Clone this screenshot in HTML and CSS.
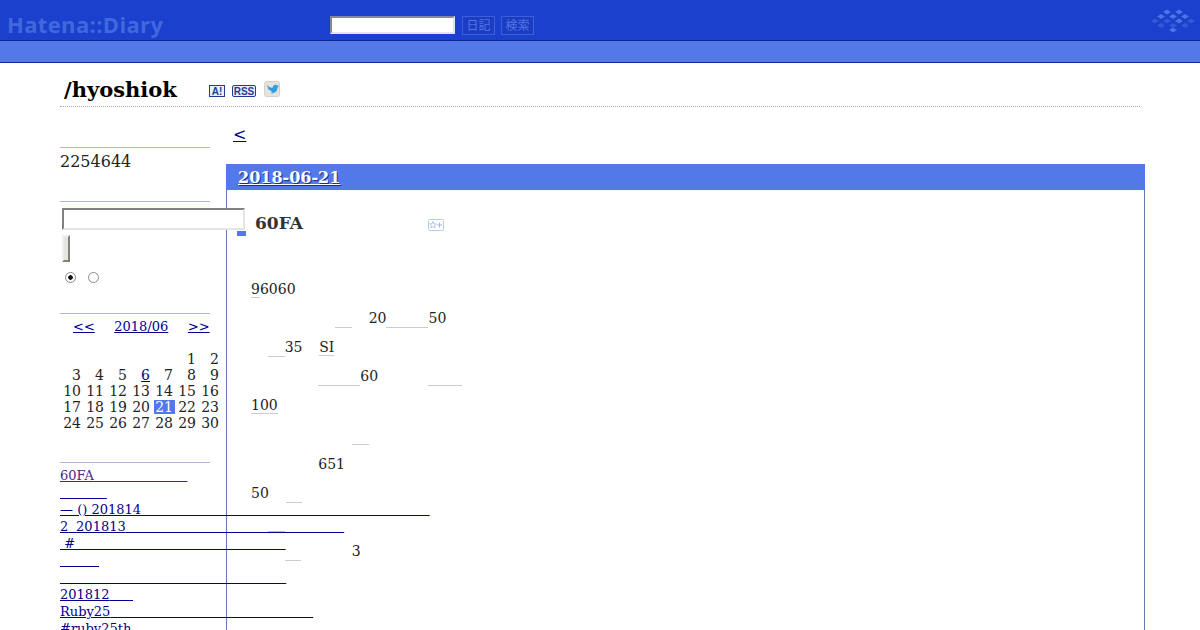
FILE: index.html
```html
<!DOCTYPE html>
<html>
<head>
	<meta charset="utf-8">
	<title>/hyoshiok</title>
	<link rel="stylesheet" href="styles.css">
</head>
<body>
<div class="page">
	<div class="topbar">
		<span class="logo">Hatena::Diary</span>
		<form class="topsearch">
			<input class="topinput" type="text">
			<span class="topbtn">日記</span>
			<span class="topbtn">検索</span>
		</form>
		<svg class="mark" width="44" height="26" viewBox="0 0 44 26">
			<g fill="#4d74e4">
				<path d="M12 3l4-2.500 4 2.500-4 2.500zM24 3l4-2.500 4 2.500-4 2.500z"/>
				<path d="M6 7.500l4-2.500 4 2.500-4 2.500zM18 7.500l4-2.500 4 2.500-4 2.500zM30 7.500l4-2.500 4 2.500-4 2.500z"/>
				<path d="M24 12l4-2.500 4 2.500-4 2.500zM18 21l4-2.500 4 2.500-4 2.500z"/>
			</g>
			<g fill="#3458d8">
				<path d="M0 12l4-2.500 4 2.500-4 2.500zM12 12l4-2.500 4 2.500-4 2.500zM36 12l4-2.500 4 2.500-4 2.500z"/>
				<path d="M6 16.500l4-2.500 4 2.500-4 2.500zM18 16.500l4-2.500 4 2.500-4 2.500zM30 16.500l4-2.500 4 2.500-4 2.500z"/>
			</g>
		</svg>
	</div>
	<div class="subbar"></div>

	<div class="content">
		<div class="title">
			<h1>/hyoshiok</h1>
			<svg class="icon-a" width="16" height="12" viewBox="0 0 16 12">
				<rect x="0.500" y="0.500" width="15" height="11" fill="#e8eefa" stroke="#1c3f94"/>
				<text x="8" y="9.800" text-anchor="middle" class="icon-text">A!</text>
			</svg>
			<svg class="icon-rss" width="24" height="12" viewBox="0 0 24 12">
				<rect x="0.500" y="0.500" width="23" height="11" rx="1.500" fill="#e8eefa" stroke="#1c3f94"/>
				<text x="12" y="9.800" text-anchor="middle" class="icon-text">RSS</text>
			</svg>
			<svg class="icon-tw" width="16" height="16" viewBox="0 0 16 16">
				<rect x="0.500" y="0.500" width="15" height="15" rx="2" fill="#e6e3dc" stroke="#d4d1ca"/>
				<path d="M2.500 3.500c2 2.300 3.700 3.200 6 3.400 0-2.700 2.700-4.200 4.500-2.400l1.700-.7-1 1.700 1.200-.2c-.3.700-.9 1.200-1.400 1.500 0 3.600-3.300 6.400-7.400 5.300 1.100 0 2-.4 2.600-1.100-1.100 0-2-.7-2.400-1.700.4 0 .8 0 1.100-.1C4.800 9.400 3.800 8.200 3.800 7c.3.100.7.200 1.100.2C3.500 6.400 2.900 5 2.500 3.500z" fill="#2f9fe4"/>
			</svg>
		</div>

		<div class="layout">
			<div class="sidebar">
				<div class="sec sec-count">2254644</div>

				<form class="sec sec-search">
					<input class="sideinput" type="text">
					<button class="sidebtn" type="button"></button>
					<div class="radios">
						<input class="radio" type="radio" name="scope" checked>
						<input class="radio" type="radio" name="scope">
					</div>
				</form>

				<div class="sec sec-cal">
					<div class="calnav">
						<a href="#">&lt;&lt;</a>
						<a href="#">2018/06</a>
						<a href="#">&gt;&gt;</a>
					</div>
					<div class="cal">
						<span></span><span></span><span></span><span></span><span></span><span>1</span><span>2</span>
						<span>3</span><span>4</span><span>5</span><span><a href="#">6</a></span><span>7</span><span>8</span><span>9</span>
						<span>10</span><span>11</span><span>12</span><span>13</span><span>14</span><span>15</span><span>16</span>
						<span>17</span><span>18</span><span>19</span><span>20</span><span class="today">21</span><span>22</span><span>23</span>
						<span>24</span><span>25</span><span>26</span><span>27</span><span>28</span><span>29</span><span>30</span>
					</div>
				</div>

				<ul class="sec recent">
					<li><a class="seen" href="#">60FA<span class="blank">&nbsp;&nbsp;&nbsp;&nbsp;&nbsp;&nbsp;&nbsp;&nbsp;&nbsp;&nbsp;&nbsp;&nbsp;</span></a></li>
					<li><a href="#"><span class="blank">&nbsp;&nbsp;&nbsp;&nbsp;&nbsp;&nbsp;</span></a></li>
					<li><a href="#">— () 201814<span class="blank">&nbsp;&nbsp;&nbsp;&nbsp;&nbsp;&nbsp;&nbsp;&nbsp;&nbsp;&nbsp;&nbsp;&nbsp;&nbsp;&nbsp;&nbsp;&nbsp;&nbsp;&nbsp;&nbsp;&nbsp;&nbsp;&nbsp;&nbsp;&nbsp;&nbsp;&nbsp;&nbsp;&nbsp;&nbsp;&nbsp;&nbsp;&nbsp;&nbsp;&nbsp;&nbsp;&nbsp;&nbsp;</span></a></li>
					<li><a href="#">2<span class="blank">&nbsp;</span>201813<span class="blank">&nbsp;&nbsp;&nbsp;&nbsp;&nbsp;&nbsp;&nbsp;&nbsp;&nbsp;&nbsp;&nbsp;&nbsp;&nbsp;&nbsp;&nbsp;&nbsp;&nbsp;&nbsp;&nbsp;&nbsp;&nbsp;&nbsp;&nbsp;&nbsp;&nbsp;&nbsp;&nbsp;&nbsp;</span></a></li>
					<li><a href="#">&nbsp;#<span class="blank">&nbsp;&nbsp;&nbsp;&nbsp;&nbsp;&nbsp;&nbsp;&nbsp;&nbsp;&nbsp;&nbsp;&nbsp;&nbsp;&nbsp;&nbsp;&nbsp;&nbsp;&nbsp;&nbsp;&nbsp;&nbsp;&nbsp;&nbsp;&nbsp;&nbsp;&nbsp;&nbsp;</span></a></li>
					<li><a href="#"><span class="blank">&nbsp;&nbsp;&nbsp;&nbsp;&nbsp;</span></a></li>
					<li><a href="#"><span class="blank">&nbsp;&nbsp;&nbsp;&nbsp;&nbsp;&nbsp;&nbsp;&nbsp;&nbsp;&nbsp;&nbsp;&nbsp;&nbsp;&nbsp;&nbsp;&nbsp;&nbsp;&nbsp;&nbsp;&nbsp;&nbsp;&nbsp;&nbsp;&nbsp;&nbsp;&nbsp;&nbsp;&nbsp;&nbsp;</span></a></li>
					<li><a href="#">201812<span class="blank">&nbsp;&nbsp;&nbsp;</span></a></li>
					<li><a href="#">Ruby25<span class="blank">&nbsp;&nbsp;&nbsp;&nbsp;&nbsp;&nbsp;&nbsp;&nbsp;&nbsp;&nbsp;&nbsp;&nbsp;&nbsp;&nbsp;&nbsp;&nbsp;&nbsp;&nbsp;&nbsp;&nbsp;&nbsp;&nbsp;&nbsp;&nbsp;&nbsp;&nbsp;</span></a></li>
					<li><a href="#">#ruby25th</a></li>
				</ul>
			</div>

			<div class="main">
				<a class="prev" href="#">&lt;</a>
				<div class="day">
					<h2><a href="#">2018-06-21</a></h2>
					<div class="body">
						<h3>
							<span class="bullet"></span>
							<span>60FA</span>
							<svg class="star" width="16" height="12" viewBox="0 0 16 12">
								<rect x="0.500" y="0.500" width="15" height="11" rx="1" fill="#fff" stroke="#b5cbe6"/>
								<path d="M5 2.500l1 2.300 2.300.2-1.800 1.500.6 2.300-2.100-1.200-2.100 1.200.6-2.300L1.700 5 4 4.800z" fill="none" stroke="#9dbbdd" stroke-width=".8"/>
								<path d="M11.500 3.500v5M9 6h5" stroke="#9dbbdd"/>
							</svg>
						</h3>
						<p class="line"><span class="kw">9</span>6060</p>
						<p class="line"><span class="blank">&nbsp;&nbsp;&nbsp;&nbsp;&nbsp;&nbsp;&nbsp;&nbsp;&nbsp;&nbsp;</span><span class="kw blank">&nbsp;&nbsp;</span><span class="blank">&nbsp;&nbsp;</span>20<span class="kw blank">&nbsp;&nbsp;&nbsp;&nbsp;&nbsp;</span>50</p>
						<p class="line"><span class="blank">&nbsp;&nbsp;</span><span class="kw blank">&nbsp;&nbsp;</span>35<span class="blank">&nbsp;&nbsp;</span><span class="kw">SI</span></p>
						<p class="line"><span class="blank">&nbsp;&nbsp;&nbsp;&nbsp;&nbsp;&nbsp;&nbsp;&nbsp;</span><span class="kw blank">&nbsp;&nbsp;&nbsp;&nbsp;&nbsp;</span>60<span class="blank">&nbsp;&nbsp;&nbsp;&nbsp;&nbsp;&nbsp;</span><span class="kw blank">&nbsp;&nbsp;&nbsp;&nbsp;</span></p>
						<p class="line"><span class="kw">100</span></p>
						<p class="line"><span class="blank">&nbsp;&nbsp;&nbsp;&nbsp;&nbsp;&nbsp;&nbsp;&nbsp;&nbsp;&nbsp;&nbsp;&nbsp;</span><span class="kw blank">&nbsp;&nbsp;</span></p>
						<p class="line"><span class="blank">&nbsp;&nbsp;&nbsp;&nbsp;&nbsp;&nbsp;&nbsp;&nbsp;</span>651</p>
						<p class="line">50<span class="blank">&nbsp;&nbsp;</span><span class="kw blank">&nbsp;&nbsp;</span></p>
						<p class="line"><span class="blank">&nbsp;&nbsp;</span><span class="kw kw-link blank">&nbsp;&nbsp;</span></p>
						<p class="line"><span class="blank">&nbsp;&nbsp;&nbsp;&nbsp;</span><span class="kw blank">&nbsp;&nbsp;</span><span class="blank">&nbsp;&nbsp;&nbsp;&nbsp;&nbsp;&nbsp;</span>3</p>
					</div>
				</div>
			</div>
		</div>
	</div>
</div>
</body>
</html>
```

FILE: styles.css
```css
html, body {
	margin: 0;
	padding: 0;
	background: #fff;
}

body {
	font-family: "DejaVu Serif", serif;
	font-size: 14px;
	color: #222;
}

a {
	color: #00008b;
}

.page {
	height: 630px;
	overflow: hidden;
}

.blank {
	font-family: "Liberation Mono", monospace;
	line-height: 0;
}

/* header */
.topbar {
	display: flex;
	align-items: center;
	height: 40px;
	background: #1a40cd;
	border-bottom: 1px solid #0c2a94;
}

.logo {
	width: 330px;
	padding: 7px 0 0 7px;
	box-sizing: border-box;
	font-family: "Open Sans", sans-serif;
	font-size: 22px;
	font-weight: 700;
	letter-spacing: 0.35px;
	color: #4168dd;
}

.topsearch {
	display: flex;
	align-items: center;
	gap: 7px;
	margin: 10px 0 0;
	flex: 1;
}

.topinput {
	width: 125px;
	height: 18px;
	margin: -1px 0 0;
	padding: 0;
	box-sizing: border-box;
	border: 2px solid;
	border-color: #85889c #dfe3f2 #dfe3f2 #85889c;
	background: #fff;
}

.topbtn {
	width: 33px;
	height: 19px;
	box-sizing: border-box;
	border: 1px solid #3a60d8;
	font-family: "Noto Sans CJK JP", sans-serif;
	font-size: 12px;
	line-height: 16px;
	text-align: center;
	color: #5076e2;
	background: #1c3cc4;
}

.topbtn + .topbtn {
	margin-left: -1px;
}

.mark {
	margin: 0 5px 0 0;
	position: relative;
	top: 2px;
}

.subbar {
	height: 21px;
	background: #5279e7;
	border-bottom: 1px solid #0c2a94;
}

/* title row */
.content {
	padding: 0 55px 0 60px;
}

.title {
	display: flex;
	align-items: center;
	height: 33px;
	margin-right: 5px;
	padding: 10px 0 0 4px;
	border-bottom: 1px dotted #aaa;
}

h1 {
	margin: 0 32px 0 0;
	font-size: 21px;
	line-height: 30px;
	color: #000;
}

.icon-text {
	font-family: "Liberation Sans", sans-serif;
	font-size: 10px;
	font-weight: 700;
	fill: #1c3f94;
}

.icon-a {
	margin-top: 2px;
	margin-right: 7px;
}

.icon-rss {
	margin-top: 2px;
	margin-right: 8px;
}

.icon-tw {
	margin-top: -2px;
}

/* sidebar */
.layout {
	display: flex;
}

.sidebar {
	position: relative;
	z-index: 1;
	flex: 0 0 150px;
	min-width: 0;
	margin: 40px 16px 0 0;
}

.sec {
	border-top: 1px solid #b0b5dc;
}

.sec-count {
	height: 42px;
	margin-bottom: 7px;
	padding-top: 4px;
	font-size: 16px;
	line-height: 20px;
}

.sec-search {
	height: 111px;
	margin: 0;
}

.sideinput {
	display: block;
	width: 183px;
	height: 22px;
	margin: 6px 0 0 2px;
	padding: 0;
	box-sizing: border-box;
	border: 2px solid;
	border-color: #808080 #e4e4e4 #e4e4e4 #808080;
	background: #fff;
}

.sidebtn {
	display: block;
	width: 8px;
	height: 27px;
	margin: 5px 0 0 2px;
	padding: 0;
	box-sizing: border-box;
	border: 2px solid;
	border-color: #f0efec #808080 #808080 #f0efec;
	background: #e6e4df;
}

.radios {
	display: flex;
	gap: 12px;
	margin: 10px 0 0 5px;
}

.radio {
	appearance: none;
	width: 11px;
	height: 11px;
	margin: 0;
	border: 1px solid #8a8a8a;
	border-radius: 50%;
	background: #fff;
}

.radio:checked {
	background: radial-gradient(circle, #111 0, #111 2px, #fff 2.500px);
}

.sec-cal {
	height: 148px;
}

.calnav {
	display: flex;
	gap: 19.5px;
	padding: 4px 0 0 13px;
	font-size: 13px;
	line-height: 18px;
}

.cal {
	display: grid;
	grid-template-columns: repeat(7, 21px);
	gap: 2px;
	width: 160px;
	margin: 16px 0 0 2px;
	line-height: 14px;
	text-align: right;
}

.cal span {
	padding: 0 2px 0 0;
}

.cal .today {
	background: #5279e7;
	color: #fff;
}

.recent {
	margin: 0;
	padding: 4px 0 0;
	list-style: none;
	font-size: 13px;
	line-height: 17px;
	white-space: nowrap;
}

.seen {
	color: #551a8b;
}

/* main column */
.main {
	flex: 1;
	min-width: 0;
	padding-top: 18px;
}

.prev {
	display: inline-block;
	margin-left: 5px;
	padding: 0 2px;
	font-size: 16px;
	line-height: 20px;
}

.day {
	margin-top: 19px;
}

h2 {
	margin: 0;
	height: 26px;
	padding-left: 12px;
	background: #5279e7;
	font-size: 16px;
	line-height: 27px;
}

h2 a {
	color: #fff;
	text-shadow: 1px 1px 0 #1c2f8a;
}

.body {
	height: 500px;
	padding: 20px 0 0 24px;
	border: 1px solid #5f7fae;
	border-width: 0 1px;
}

h3 {
	display: flex;
	align-items: center;
	height: 26px;
	margin: 0 0 0 -14px;
	padding: 0;
	font-size: 17px;
	color: #333;
}

.bullet {
	align-self: flex-end;
	width: 9px;
	height: 5px;
	margin-right: 9px;
	background: #5279e7;
}

.star {
	margin: 4px 0 0 125px;
}

.line {
	margin: 0;
	line-height: 29.125px;
}

h3 + .line {
	margin-top: 38.9px;
}

.kw {
	border-bottom: 1px solid #ccc;
}

.kw-link {
	border-bottom-color: #b8c0ea;
}
```
